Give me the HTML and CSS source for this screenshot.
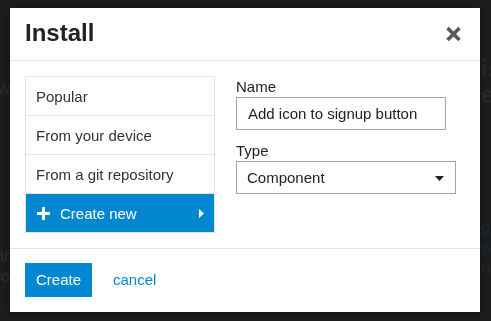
FILE: index.html
```html
<!DOCTYPE html>
<html lang="en">
<head>
	<meta charset="UTF-8">
	<title>Install</title>
	<link rel="stylesheet" href="styles.css">
</head>
<body>
	<!-- page behind the overlay -->
	<div class="page">
		<div class="page-left">
			<p class="dim top">New</p>
			<p class="dim">So far</p>
			<p class="dim">Hello</p>
		</div>
		<div class="page-mid"></div>
		<div class="page-right">
			<h2 class="dim-head">is</h2>
			<h2 class="dim-head">e</h2>
			<p class="dim-link first">g</p>
			<p class="dim-link">sc</p>
			<p class="dim-link">ne</p>
		</div>
	</div>

	<div class="modal">
		<div class="modal-header">
			<h1 class="modal-title">Install</h1>
			<a href="javascript:;" class="modal-close">
				<svg width="17" height="16" viewBox="0 0 17 16">
					<path d="M2.5 2 L14.5 14 M14.5 2 L2.5 14" stroke="#595959" stroke-width="3.6" fill="none"/>
				</svg>
			</a>
		</div>
		<div class="modal-body">
			<ul class="source-list">
				<li>Popular</li>
				<li>From your device</li>
				<li>From a git repository</li>
				<li class="active">
					<svg class="plus" width="13" height="13" viewBox="0 0 13 13">
						<path d="M5 0h3v13H5z M0 5h13v3H0z" fill="#fff"/>
					</svg>
					<span class="label">Create new</span>
					<svg class="caret-right" width="5" height="9" viewBox="0 0 5 9">
						<path d="M0 0 L5 4.5 L0 9z" fill="#fff"/>
					</svg>
				</li>
			</ul>
			<div class="form">
				<label class="field-label">Name</label>
				<input class="field" type="text" value="Add icon to signup button">
				<label class="field-label type">Type</label>
				<div class="field select">
					<span>Component</span>
					<svg width="9" height="5" viewBox="0 0 9 5">
						<path d="M0 0 L9 0 L4.5 5z" fill="#222"/>
					</svg>
				</div>
			</div>
		</div>
		<div class="modal-footer">
			<a href="javascript:;" class="btn">Create</a>
			<a href="javascript:;" class="cancel">cancel</a>
		</div>
	</div>
</body>
</html>
```

FILE: styles.css
```css
*{margin: 0;padding: 0;list-style: none;box-sizing: border-box}
body{
	background: #1d1d1d;
	font-family: "Liberation Sans", Arial, sans-serif;
	width: 491px;
	height: 321px;
	overflow: hidden;
}
.page{
	display: grid;
	grid-template-columns: 10px 471px 1fr;
	height: 321px;
	overflow: hidden;
}
.page-left{
	display: flex;
	flex-direction: column;
	align-items: flex-end;
	padding-top: 78px;
}
.page-left .dim{
	white-space: nowrap;
	font-size: 17px;
	line-height: 21px;
	color: #2e2e2e;
}
.page-left .top{
	margin-bottom: 146px;
}
.page-right{
	padding-top: 56px;
	white-space: nowrap;
}
.dim-head{
	font-size: 24px;
	line-height: 26px;
	color: #282828;
}
.dim-link{
	font-size: 17px;
	line-height: 21px;
	color: #1b2937;
}
.dim-link.first{
	margin-top: 109px;
}

/* dialog */
.modal{
	position: fixed;
	left: 10px;
	top: 8px;
	width: 470px;
	height: 304px;
	background: #fff;
	display: flex;
	flex-direction: column;
	box-shadow: 0 2px 8px rgba(0,0,0,0.4);
}
.modal-header{
	height: 53px;
	border-bottom: 1px solid #e5e5e5;
	display: flex;
	align-items: center;
	justify-content: space-between;
	padding: 0 18px 2px 15px;
}
.modal-title{
	font-size: 24px;
	font-weight: bold;
	color: #222;
}
.modal-close{
	display: block;
	width: 17px;
	height: 16px;
	margin-top: 2px;
}
.modal-close svg{display: block}
.modal-body{
	flex: 1;
	display: flex;
	gap: 21px;
	padding: 15px 24px 15px 15px;
}
.source-list{
	width: 190px;
	border: 1px solid #e5e5e5;
	align-self: flex-start;
}
.source-list li{
	height: 39px;
	border-bottom: 1px solid #e5e5e5;
	display: flex;
	align-items: center;
	padding: 0 10px;
	font-size: 15px;
	color: #333;
}
.source-list li.active{
	height: 38px;
	border-bottom: 0;
	background: #0288d1;
	color: #fff;
	padding: 0 10px 0 11px;
}
.source-list .plus{margin-right: 10px;margin-top: 1px}
.source-list .label{flex: 1}
.form{
	width: 220px;
	display: flex;
	flex-direction: column;
	padding-top: 2px;
}
.field-label{
	font-size: 15px;
	color: #222;
	margin-bottom: 2px;
}
.field-label.type{margin-top: 12px}
.field{
	height: 33px;
	border: 1px solid #a5a5a5;
	font: 15px "Liberation Sans", Arial, sans-serif;
	color: #222;
	padding: 0 10px 0 11px;
	outline: none;
}
input.field{width: 210px}
.select{
	width: 220px;
	display: flex;
	align-items: center;
	justify-content: space-between;
	padding: 0 11px 0 10px;
}
.select svg{display: block;margin-top: 1px}
.modal-footer{
	height: 64px;
	border-top: 1px solid #e5e5e5;
	display: flex;
	align-items: flex-start;
	gap: 21px;
	padding: 14px 15px 0 15px;
}
.btn{
	display: block;
	height: 34px;
	line-height: 34px;
	padding: 0 11px;
	background: #0288d1;
	color: #fff;
	font-size: 15px;
	text-decoration: none;
}
.cancel{
	line-height: 34px;
	color: #0288d1;
	font-size: 15px;
	text-decoration: none;
}
```
